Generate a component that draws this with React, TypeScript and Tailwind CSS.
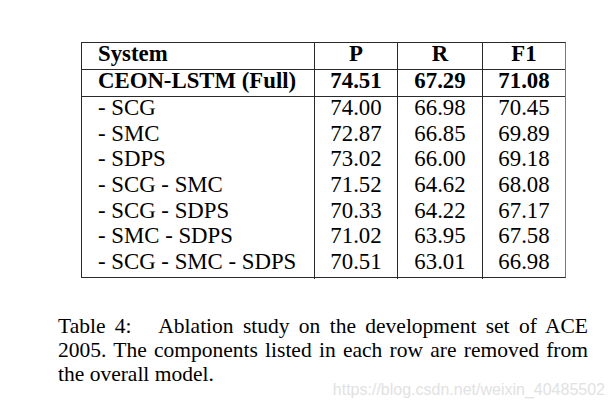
import React from "react";

const rows = [
  ["- SCG", "74.00", "66.98", "70.45"],
  ["- SMC", "72.87", "66.85", "69.89"],
  ["- SDPS", "73.02", "66.00", "69.18"],
  ["- SCG - SMC", "71.52", "64.62", "68.08"],
  ["- SCG - SDPS", "70.33", "64.22", "67.17"],
  ["- SMC - SDPS", "71.02", "63.95", "67.58"],
  ["- SCG - SMC - SDPS", "70.51", "63.01", "66.98"],
];

function Row({
  cells,
  className,
  cellClass,
}: {
  cells: string[];
  className: string;
  cellClass: string;
}) {
  return (
    <div className={`grid grid-cols-[232px_83px_85px_83px] ${className}`}>
      <div className={`flex items-center pl-[16px] ${cellClass}`}>{cells[0]}</div>
      <div className={`flex items-center justify-center border-l border-[#2a2a2a] ${cellClass}`}>{cells[1]}</div>
      <div className={`flex items-center justify-center border-l border-[#2a2a2a] ${cellClass}`}>{cells[2]}</div>
      <div className={`flex items-center justify-center border-l border-[#2a2a2a] ${cellClass}`}>{cells[3]}</div>
    </div>
  );
}

export default function App() {
  return (
    <div className="w-[614px] h-[408px] bg-white text-black font-['Liberation_Serif',serif] flex flex-col">
      {/* Table */}
      <div className="pt-[42px] pl-[81px]">
        <div className="w-[485px] border border-[#2a2a2a] border-r-[#777] text-[22.8px] leading-none">
          <Row
            cells={["System", "P", "R", "F1"]}
            className="h-[27px] border-b border-[#2a2a2a] font-bold"
            cellClass="pb-[3px]"
          />
          <Row
            cells={["CEON-LSTM (Full)", "74.51", "67.29", "71.08"]}
            className="h-[27px] border-b border-[#2a2a2a] font-bold"
            cellClass="pb-[4px]"
          />
          {rows.map((r) => (
            <Row key={r[0]} cells={r} className="h-[25.7px]" cellClass="pb-[5px]" />
          ))}
        </div>
      </div>

      {/* Caption */}
      <div className="mt-[36px] ml-[58px] w-[530px] text-[21.5px] leading-[24px] text-justify">
        <div className="[text-align-last:justify]">
          Table 4:&nbsp;&nbsp; Ablation study on the development set of ACE
        </div>
        <div className="[text-align-last:justify]">
          2005. The components listed in each row are removed from
        </div>
        <div>the overall model.</div>
      </div>

      {/* Watermark */}
      <div className="flex justify-end pr-[9px] mt-[-4px]">
        <span className="font-['Liberation_Sans',sans-serif] text-[16px] leading-none text-[#e2e2e2]">
          https://blog.csdn.net/weixin_40485502
        </span>
      </div>
    </div>
  );
}
